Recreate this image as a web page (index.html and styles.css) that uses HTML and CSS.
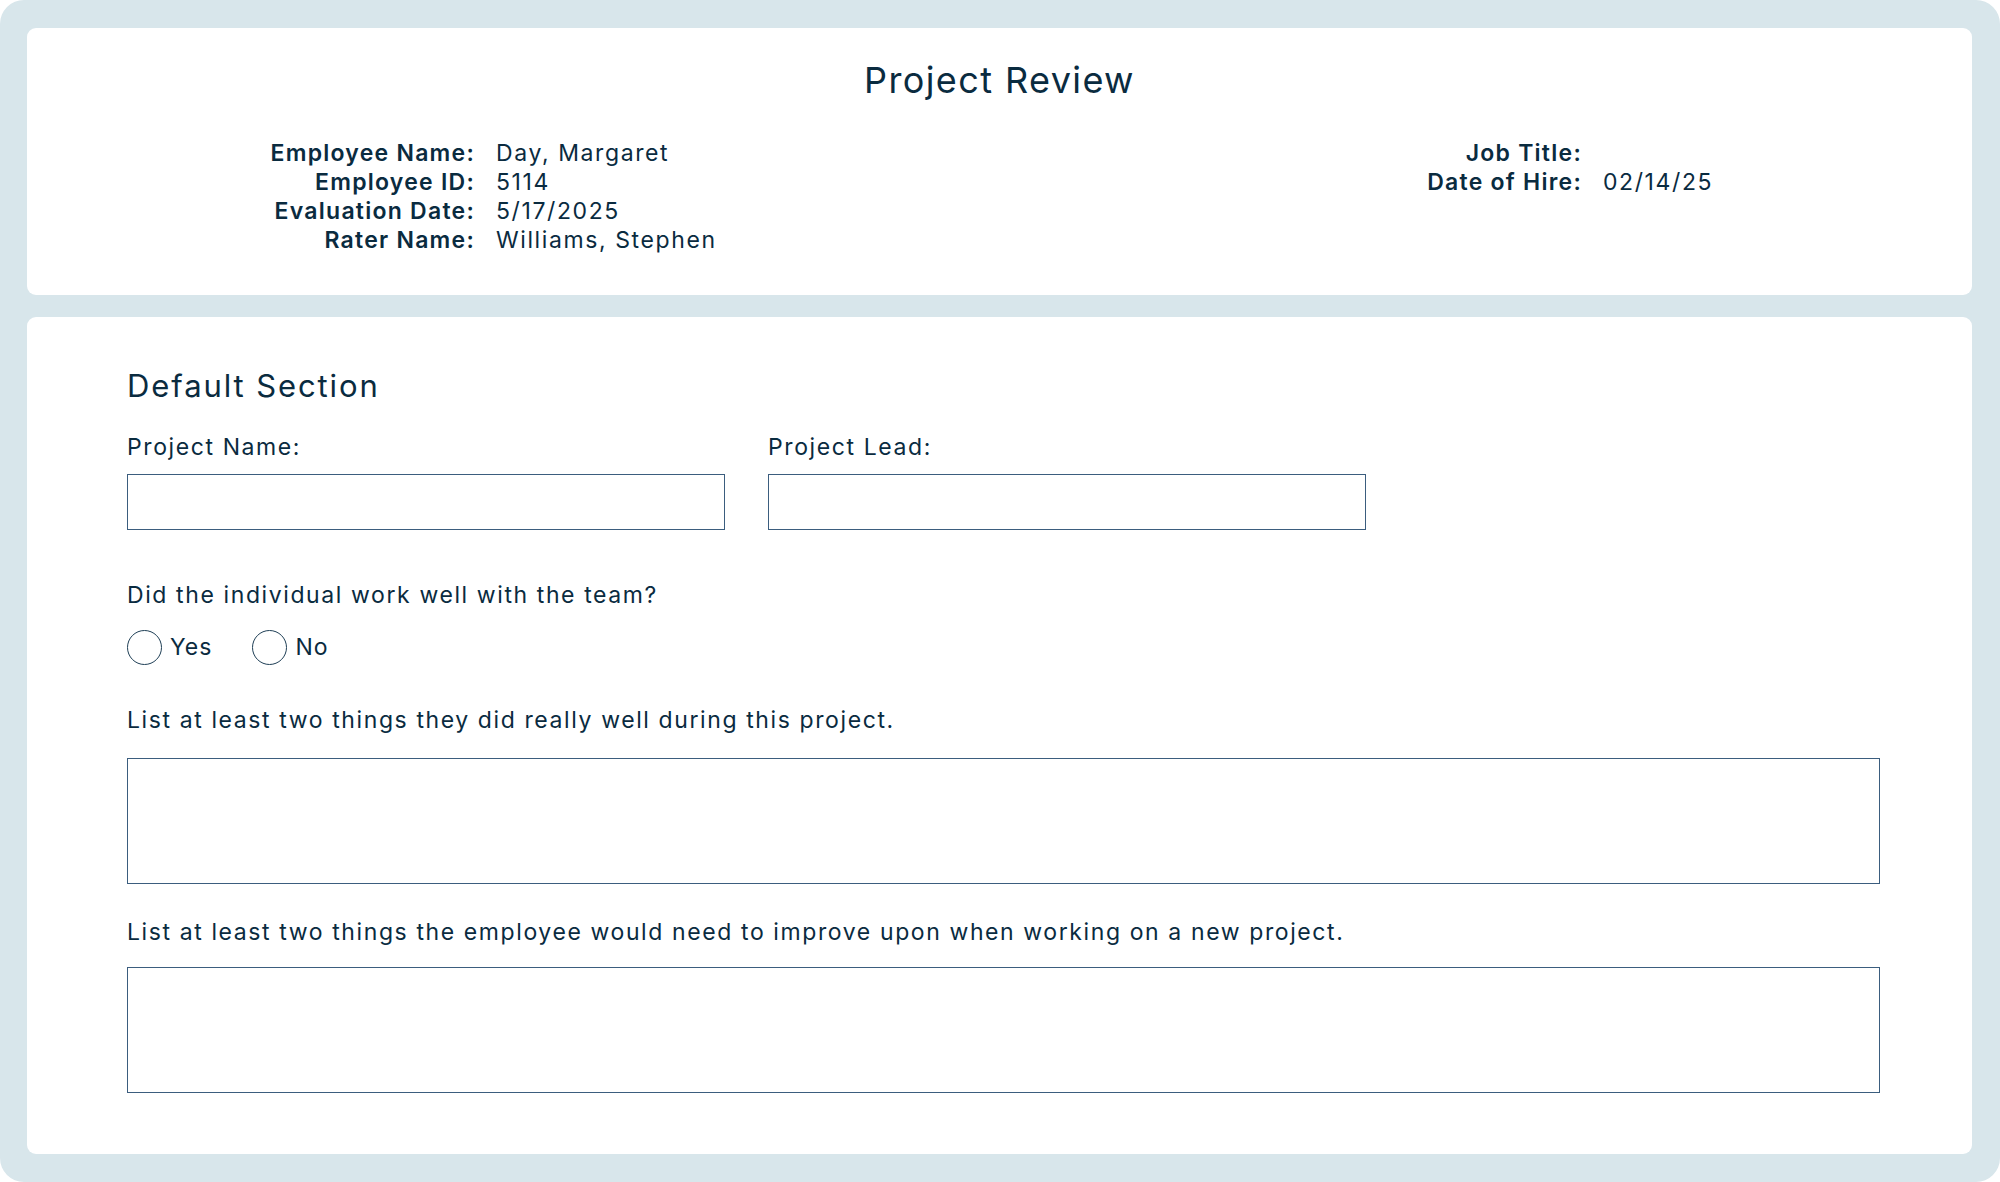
FILE: index.html
```html
<!DOCTYPE html>
<html lang="en">
<head>
<meta charset="utf-8">
<title>Project Review</title>
<link rel="stylesheet" href="styles.css">
</head>
<body>
<div class="frame">
  <section class="card header-card">
    <h1 class="title">Project Review</h1>
    <div class="info">
      <dl class="info-group info-left">
        <dt>Employee Name:</dt><dd>Day, Margaret</dd>
        <dt>Employee ID:</dt><dd>5114</dd>
        <dt>Evaluation Date:</dt><dd>5/17/2025</dd>
        <dt>Rater Name:</dt><dd>Williams, Stephen</dd>
      </dl>
      <dl class="info-group info-right">
        <dt>Job Title:</dt><dd></dd>
        <dt>Date of Hire:</dt><dd>02/14/25</dd>
      </dl>
    </div>
  </section>
  <section class="card form-card">
    <h2 class="section-title">Default Section</h2>
    <div class="field-row">
      <div class="field">
        <label class="label" for="pname">Project Name:</label>
        <input class="text-input" id="pname" type="text">
      </div>
      <div class="field">
        <label class="label" for="plead">Project Lead:</label>
        <input class="text-input" id="plead" type="text">
      </div>
    </div>
    <div class="question">
      <p class="label">Did the individual work well with the team?</p>
      <div class="radios">
        <label class="radio"><input type="radio" name="team"><span>Yes</span></label>
        <label class="radio"><input type="radio" name="team"><span>No</span></label>
      </div>
    </div>
    <div class="long-field first">
      <label class="label" for="well">List at least two things they did really well during this project.</label>
      <textarea class="text-area" id="well"></textarea>
    </div>
    <div class="long-field second">
      <label class="label" for="improve">List at least two things the employee would need to improve upon when working on a new project.</label>
      <textarea class="text-area" id="improve"></textarea>
    </div>
  </section>
</div>
</body>
</html>
```

FILE: styles.css
```css
* { box-sizing: border-box; }

html, body {
  margin: 0;
  padding: 0;
  background: #ffffff;
}

body {
  font-family: Inter, "Open Sans", "Liberation Sans", sans-serif;
  color: #0a2b3f;
}

.frame {
  width: 2000px;
  height: 1182px;
  background: #d8e6eb;
  border-radius: 24px;
  padding: 28px 28px 28px 27px;
  display: flex;
  flex-direction: column;
  gap: 22px;
}

.card {
  background: #ffffff;
  border-radius: 9px;
}

/* header card */
.header-card {
  height: 267px;
  padding: 31px 0 0 0;
}

.title {
  margin: 0;
  text-align: center;
  font-size: 36px;
  line-height: 43px;
  font-weight: 400;
  letter-spacing: 1.4px;
}

.info {
  margin-top: 36.5px;
  display: grid;
  grid-template-columns: 973px 1fr;
}

.info-group {
  margin: 0;
  display: grid;
  column-gap: 21px;
  font-size: 23px;
  line-height: 29.3px;
  align-content: start;
}

.info-left { grid-template-columns: 448px 1fr; }
.info-right { grid-template-columns: 582px 1fr; }

.info-group dt {
  text-align: right;
  font-weight: 600;
  letter-spacing: 1.25px;
  white-space: nowrap;
}

.info-group dd {
  margin: 0;
  white-space: nowrap;
  letter-spacing: 1.6px;
  min-height: 29.3px;
}

/* form card */
.form-card {
  flex: 1;
  padding: 50px 92px 0 100px;
}

.section-title {
  margin: 0;
  font-size: 31px;
  line-height: 37px;
  font-weight: 400;
  letter-spacing: 1.9px;
}

.label {
  display: block;
  margin: 0;
  padding-top: 3px;
  font-size: 23px;
  line-height: 29px;
  font-weight: 400;
  letter-spacing: 1.6px;
}

.field-row {
  margin-top: 26px;
  display: flex;
  gap: 43px;
}

.field .label { margin-bottom: 12px; }

.text-input {
  display: block;
  width: 598px;
  height: 56px;
  border: 1.5px solid #3b5d7e;
  border-radius: 0;
  background: #ffffff;
  margin: 0;
  padding: 0 12px;
  font: inherit;
}

.question { margin-top: 48px; }

.radios {
  margin-top: 20px;
  display: flex;
  gap: 40px;
  height: 35px;
}

.radio {
  display: flex;
  align-items: center;
  gap: 8px;
  font-size: 23px;
  line-height: 29px;
  letter-spacing: 1px;
}

.radio input {
  appearance: none;
  -webkit-appearance: none;
  margin: 0;
  width: 35px;
  height: 35px;
  border: 1.6px solid #1f3f56;
  border-radius: 50%;
  background: #ffffff;
}

.long-field.first { margin-top: 38px; }
.long-field.first .label { margin-bottom: 23px; }
.long-field.second { margin-top: 31px; }
.long-field.second .label { margin-bottom: 20px; }

.text-area {
  display: block;
  width: 100%;
  height: 126px;
  border: 1.5px solid #3b5d7e;
  border-radius: 0;
  margin: 0;
  padding: 10px 12px;
  resize: none;
  font: inherit;
  background: #ffffff;
}
```
